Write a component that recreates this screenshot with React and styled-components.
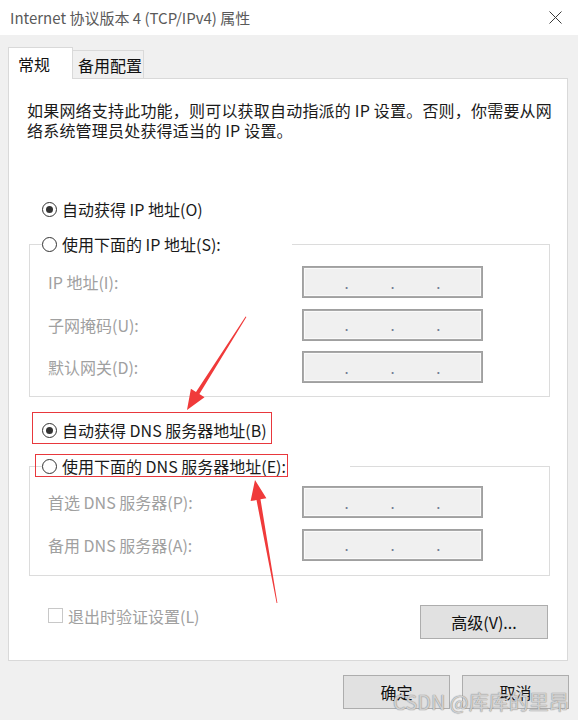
import React from "react";
import styled, { createGlobalStyle } from "styled-components";

const GlobalStyle = createGlobalStyle`
  html, body { margin: 0; padding: 0; background: #f0f0f0; }
  body { font-family: "Noto Sans CJK SC", "Microsoft YaHei", sans-serif; }
  * { box-sizing: border-box; }
`;

const Window = styled.div`
  position: relative;
  width: 578px;
  height: 720px;
  overflow: hidden;
  background: #f0f0f0;
  display: flex;
  flex-direction: column;
`;

const TitleBar = styled.div`
  height: 35px;
  flex: none;
  background: #fff;
  display: flex;
  align-items: center;
  justify-content: space-between;
  padding: 0 16px 0 10px;
  color: #5a5a5a;
  font-size: 15px;
`;

const Content = styled.div`
  padding: 12px 10px 0 8px;
  display: flex;
  flex-direction: column;
`;

const TabRow = styled.div`
  display: flex;
  align-items: flex-end;
  height: 32px;
  margin-bottom: -1px;
  position: relative;
  z-index: 1;
`;

const Tab = styled.div`
  display: flex;
  align-items: center;
  height: ${(p) => (p.$active ? "32px" : "29px")};
  width: ${(p) => (p.$active ? "65px" : "72px")};
  margin-left: ${(p) => (p.$active ? "0" : "-1px")};
  padding-left: ${(p) => (p.$active ? "9px" : "5px")};
  background: ${(p) => (p.$active ? "#fff" : "#f0f0f0")};
  border: 1px solid #d9d9d9;
  border-bottom: ${(p) => (p.$active ? "none" : "1px solid #d9d9d9")};
  font-size: 16px;
  color: #111;
  position: relative;
  z-index: ${(p) => (p.$active ? 2 : 1)};
`;

const Panel = styled.div`
  width: 560px;
  height: 583px;
  background: #fff;
  border: 1px solid #d9d9d9;
  display: flex;
  flex-direction: column;
  padding-top: 21px;
`;

const Intro = styled.p`
  margin: 0 0 0 18px;
  font-size: 16px;
  line-height: 20px;
  color: #1a1a1a;
  letter-spacing: 0.2px;
`;

const RadioRow = styled.label`
  position: relative;
  display: flex;
  align-self: flex-start;
  align-items: center;
  gap: 5px;
  height: 20px;
  font-size: 16px;
  color: #1a1a1a;
  margin-top: ${(p) => p.$mt || 0}px;
  margin-left: ${(p) => p.$ml || 0}px;
  white-space: nowrap;
`;

const RadioCircle = styled.span`
  width: 15px;
  height: 15px;
  flex: none;
  border-radius: 50%;
  border: 1px solid #333;
  background: #fff;
  display: flex;
  align-items: center;
  justify-content: center;
  &::after {
    content: "";
    width: 7px;
    height: 7px;
    border-radius: 50%;
    background: ${(p) => (p.$checked ? "#333" : "transparent")};
  }
`;

const Highlight = styled.span`
  position: absolute;
  top: ${(p) => p.$top}px;
  left: ${(p) => p.$left}px;
  width: ${(p) => p.$w}px;
  height: ${(p) => p.$h}px;
  border: 1px solid #e8383d;
  pointer-events: none;
`;

const GroupBox = styled.div`
  margin-top: ${(p) => p.$mt}px;
  margin-left: 20px;
  width: 521px;
  border: 1px solid #dcdcdc;
  padding: 0 0 ${(p) => p.$pb}px 18px;
  display: flex;
  flex-direction: column;
`;

const Legend = styled.div`
  margin-top: -11px;
  margin-left: -6px;
  width: ${(p) => p.$w}px;
  background: #fff;
  display: flex;
`;

const FieldGrid = styled.div`
  margin-top: ${(p) => p.$mt}px;
  display: grid;
  grid-template-columns: 254px 181px;
  grid-auto-rows: 32px;
  row-gap: 10.5px;
  align-items: center;
`;

const FieldLabel = styled.span`
  font-size: 16px;
  color: #a0a0a0;
  white-space: nowrap;
`;

const IpBox = styled.div`
  height: 32px;
  background: #f0f0f0;
  border: 1px solid #a0a0a0;
  box-shadow: inset 0 0 0 1px #a8a8a8, inset 0 0 0 2px #fafafa;
  display: flex;
  align-items: center;
  justify-content: space-evenly;
  font-size: 15px;
  line-height: 1;
  color: #6f7c90;
`;

const BottomRow = styled.div`
  margin-top: 29px;
  padding-left: 39px;
  padding-right: 19px;
  display: flex;
  justify-content: space-between;
  align-items: flex-start;
`;

const CheckLabel = styled.label`
  margin-top: 1px;
  height: 20px;
  display: flex;
  align-items: center;
  gap: 5px;
  font-size: 16px;
  color: #a0a0a0;
`;

const CheckBox = styled.span`
  width: 15px;
  height: 15px;
  border: 1px solid #c8c8c8;
  background: #fff;
`;

const Button = styled.button`
  width: ${(p) => p.$w}px;
  height: 34px;
  padding: 0;
  background: #e1e1e1;
  border: 1px solid #adadad;
  border-radius: 0;
  font-family: inherit;
  font-size: 16px;
  color: #111;
`;

const Footer = styled.div`
  margin-top: 14px;
  margin-right: -1px;
  display: flex;
  justify-content: flex-end;
  gap: 12px;
`;

const Overlay = styled.svg`
  position: absolute;
  left: 0;
  top: 0;
  width: 578px;
  height: 720px;
  pointer-events: none;
`;

const Watermark = styled.div`
  position: absolute;
  left: 393px;
  top: 689px;
  font-size: 20px;
  line-height: 26px;
  color: rgba(255, 255, 255, 0.6);
  text-shadow: 0 0 1px #8a8a8a, 0 0 1px #8a8a8a;
  white-space: nowrap;
  pointer-events: none;
`;

const Radio = ({ checked, children, ...rest }) => (
  <RadioRow {...rest}>
    <RadioCircle $checked={checked} />
    {children}
  </RadioRow>
);

const IpField = () => (
  <IpBox>
    <span>.</span>
    <span>.</span>
    <span>.</span>
  </IpBox>
);

export default function App() {
  return (
    <>
      <GlobalStyle />
      <Window>
        <TitleBar>
          <span>Internet 协议版本 4 (TCP/IPv4) 属性</span>
          <svg width="13" height="13" viewBox="0 0 13 13">
            <path d="M0.5 0.5 L12.5 12.5 M12.5 0.5 L0.5 12.5" stroke="#3a3a3a" strokeWidth="1" fill="none" />
          </svg>
        </TitleBar>
        <Content>
          <TabRow>
            <Tab $active>常规</Tab>
            <Tab>备用配置</Tab>
          </TabRow>
          <Panel>
            <Intro>
              如果网络支持此功能，则可以获取自动指派的 IP 设置。否则，你需要从网
              <br />
              络系统管理员处获得适当的 IP 设置。
            </Intro>
            <Radio checked $mt={59} $ml={33}>
              <span>自动获得 IP 地址(O)</span>
            </Radio>
            <GroupBox $mt={25} $pb={13}>
              <Legend $w={250}>
                <Radio>
                  <span>使用下面的 IP 地址(S):</span>
                </Radio>
              </Legend>
              <FieldGrid $mt={12}>
                <FieldLabel>IP 地址(I):</FieldLabel>
                <IpField />
                <FieldLabel>子网掩码(U):</FieldLabel>
                <IpField />
                <FieldLabel>默认网关(D):</FieldLabel>
                <IpField />
              </FieldGrid>
            </GroupBox>
            <Radio checked $mt={23} $ml={33}>
              <span>自动获得 DNS 服务器地址(B)</span>
              <Highlight $top={-8} $left={-10} $w={240} $h={32} />
            </Radio>
            <GroupBox $mt={26} $pb={14}>
              <Legend $w={308}>
                <Radio>
                  <span>使用下面的 DNS 服务器地址(E):</span>
                  <Highlight $top={-2} $left={-7} $w={253} $h={23} />
                </Radio>
              </Legend>
              <FieldGrid $mt={10}>
                <FieldLabel>首选 DNS 服务器(P):</FieldLabel>
                <IpField />
                <FieldLabel>备用 DNS 服务器(A):</FieldLabel>
                <IpField />
              </FieldGrid>
            </GroupBox>
            <BottomRow>
              <CheckLabel>
                <CheckBox />
                <span>退出时验证设置(L)</span>
              </CheckLabel>
              <Button $w={128}>高级(V)...</Button>
            </BottomRow>
          </Panel>
          <Footer>
            <Button $w={107}>确定</Button>
            <Button $w={107}>取消</Button>
          </Footer>
        </Content>
        <Overlay viewBox="0 0 578 720">
          <polygon
            points="246.4,317 199.4,394.1 204.5,397.3 187,410 190.9,388.7 196,391.9 245.6,316.6"
            fill="#f03a3a"
          />
          <polygon
            points="277.4,603 260.5,499.3 266.4,498.3 255,480 250.6,501.1 256.5,500.1 276.6,603"
            fill="#f03a3a"
          />
        </Overlay>
        <Watermark>CSDN @库库的里昂</Watermark>
      </Window>
    </>
  );
}
